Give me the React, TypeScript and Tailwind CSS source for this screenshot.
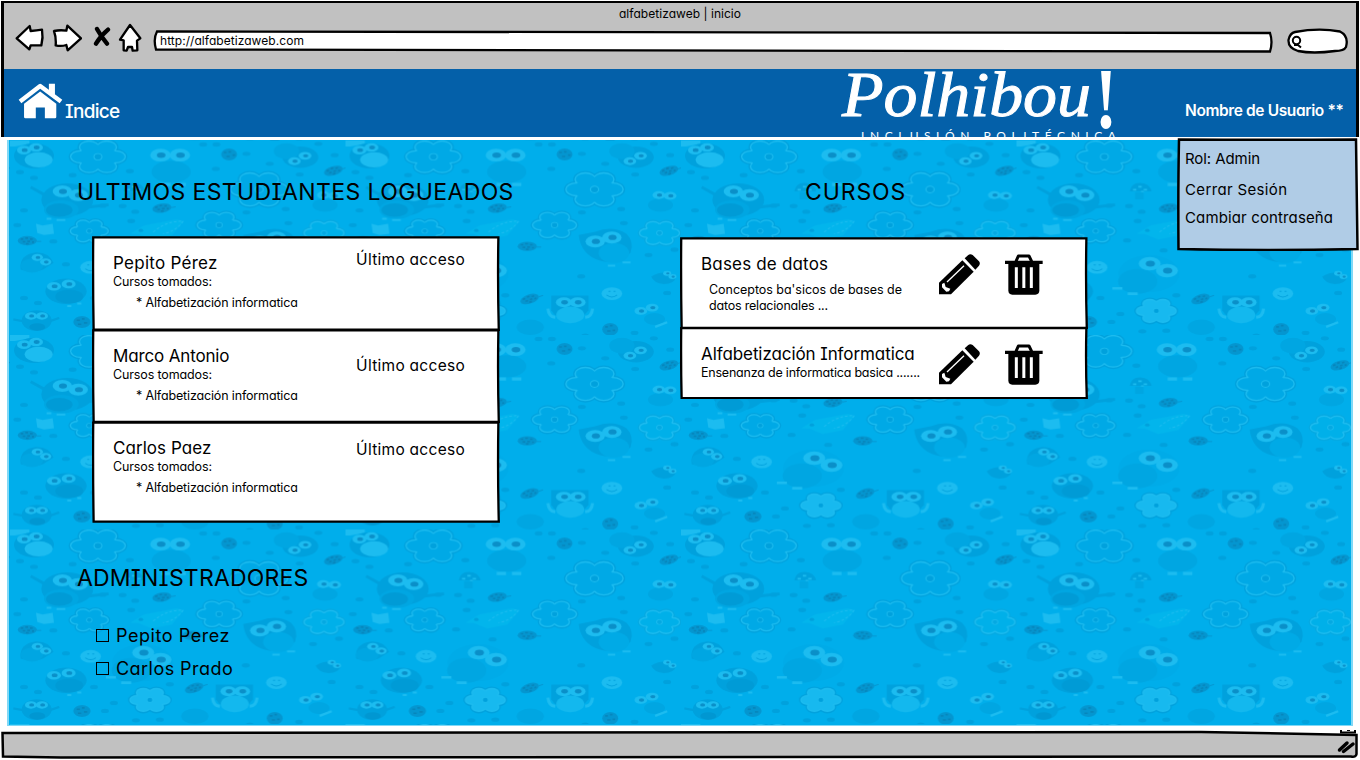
import React from "react";

type Pt = [number, number];

/* ---------- Owl pattern ---------- */

const DARK = "#00a1dd";
const MID = "#00a6e2";
const LIGHT = "#1cbcf0";
const EDGE = "#0a8fc8";

const Eyes = ({ a, b, r = 22 }: { a: Pt; b: Pt; r?: number }) => (
  <g>
    {[a, b].map(([x, y], i) => (
      <g key={i}>
        <ellipse cx={x} cy={y} rx={r} ry={r * 0.62} fill={LIGHT} />
        <ellipse cx={x + 2} cy={y} rx={r * 0.42} ry={r * 0.27} fill={EDGE} />
      </g>
    ))}
  </g>
);

const Blossom = ({ c, r, fill = "#00a9e6", line = LIGHT, rim = DARK }: { c: Pt; r: number; fill?: string; line?: string; rim?: string }) => {
  const petals = [0, 60, 120, 180, 240, 300].map((d) => {
    const t = (d * Math.PI) / 180;
    return [Math.cos(t) * r * 0.63, Math.sin(t) * r * 0.4] as Pt;
  });
  const layer = (grow: number, core: number, color: string) => (
    <g fill={color}>
      {petals.map(([x, y], i) => (
        <ellipse key={i} cx={x} cy={y} rx={r * 0.37 + grow} ry={r * 0.24 + grow} />
      ))}
      <ellipse rx={r * core} ry={r * core * 0.62} />
    </g>
  );
  return (
    <g transform={`translate(${c[0]} ${c[1]})`}>
      {layer(4, 0.6, rim)}
      {layer(0, 0.6, line)}
      {layer(-4, 0.68, fill)}
      <ellipse rx={r * 0.16} ry={r * 0.13} fill={line} />
      <ellipse rx={r * 0.12} ry={r * 0.1} fill={rim} />
    </g>
  );
};

const Bug = ({ c, tilt = 0 }: { c: Pt; tilt?: number }) => (
  <g transform={`translate(${c[0]} ${c[1]}) rotate(${tilt})`}>
    <ellipse rx="29" ry="14" fill="#0496d0" />
    <path d="M-20 -5h8M-6 -8h8M8 -5h8M-14 3h8M0 2h8M14 4h6M-4 9h8" stroke="#0686bc" strokeWidth="5" />
    <path d="M28 2h14" stroke="#0496d0" strokeWidth="3" />
  </g>
);

const Face = ({ c }: { c: Pt }) => (
  <g transform={`translate(${c[0]} ${c[1]})`}>
    <ellipse rx="31" ry="19" fill={LIGHT} />
    <path d="M-16 4Q0 16 16 4M-10 -7h6M5 -7h6" stroke={DARK} strokeWidth="3" fill="none" />
  </g>
);

const SPECKS: Pt[] = [
  [30, 95], [72, 112], [188, 104], [360, 92], [618, 85], [580, 12], [42, 210], [278, 196], [338, 197], [376, 214],
  [22, 254], [364, 242], [332, 300], [130, 303], [442, 330], [168, 372], [42, 473], [84, 488], [252, 473], [312, 521],
  [480, 465], [378, 573], [285, 545], [450, 571], [620, 12], [870, 102], [828, 206], [710, 216], [708, 408],
  [988, 328], [910, 344], [966, 458], [836, 248], [710, 40], [926, 10], [975, 44], [868, 578], [720, 586], [582, 597], [780, 70],
];

const OwlPattern = () => (
  <svg className="absolute inset-0 size-full" aria-hidden="true">
    <defs>
      <pattern id="owls" width="335.5" height="194.5" patternUnits="userSpaceOnUse" patternTransform="translate(1 0.5)">
        <g transform="scale(0.333)">
          {SPECKS.map(([x, y], i) => (
            <ellipse key={i} cx={x} cy={y} rx="12" ry="6.5" fill={DARK} />
          ))}
          <path d="M0 0H58V10L14 18H0Z" fill={LIGHT} />
          <ellipse cx="72" cy="46" rx="60" ry="38" fill={DARK} />
          <ellipse cx="86" cy="58" rx="42" ry="23" fill={LIGHT} />
          <Eyes a={[42, 29]} b={[78, 21]} r={21} />
          <Blossom c={[264, 49]} r={84} />
          <ellipse cx="484" cy="94" rx="59" ry="33" fill={MID} />
          <path d="M454 132h28M500 132h28" stroke={LIGHT} strokeWidth="10" />
          <Eyes a={[452, 44]} b={[510, 44]} r={31} />
          <path d="M62 140l40 22M236 200l60 -7" stroke={DARK} strokeWidth="9" />
          <ellipse cx="172" cy="178" rx="78" ry="49" fill={DARK} />
          <ellipse cx="154" cy="208" rx="52" ry="28" fill={MID} />
          <ellipse cx="148" cy="209" rx="40" ry="20" fill="#009bd6" />
          <Eyes a={[157, 153]} b={[205, 164]} r={29} />
          <path d="M110 235h14M140 239h26" stroke={LIGHT} strokeWidth="6" />
          <path d="M340 153q4-27 32-26q28 1 34 26z" fill={DARK} />
          <path d="M350 148h10M366 139h10M382 148h10M374 154h8" stroke={LIGHT} strokeWidth="5" />
          <path d="M356 155h26v22h-26z" fill={MID} />
          <path d="M362 280l40-25 100-18 18 6-34 42-60 12-40-16z" fill="#02b5ec" />
          <path d="M430 275q40-34 90-33q-20 30-60 38" stroke={LIGHT} strokeWidth="3" fill="none" strokeDasharray="8 6" />
          <ellipse cx="393" cy="270" rx="7" ry="5" fill={DARK} />
          <Blossom c={[238, 272]} r={59} />
          <path d="M78 250l20 5 30-5 4 30-30 4-20-6z" fill={LIGHT} />
          <Bug c={[52, 301]} />
          <Bug c={[546, 318]} />
          <Bug c={[456, 203]} tilt={-8} />
          <Bug c={[553, 476]} tilt={-18} />
          <ellipse cx="658" cy="42" rx="24" ry="18" fill="#0496d0" />
          <path d="M642 36h8M656 34h8M668 44h8M650 48h10" stroke="#0686bc" strokeWidth="5" />
          <Blossom c={[628, 254]} r={68} />
          <path d="M32 388q-6-46 46-52q40-1 53 32l-32 20q-30 12-67 0z" fill={DARK} />
          <ellipse cx="66" cy="376" rx="34" ry="21" fill={MID} />
          <Eyes a={[82, 351]} b={[107, 365]} r={17} />
          <Face c={[242, 381]} />
          <ellipse cx="398" cy="400" rx="92" ry="56" fill="#00abe8" />
          <ellipse cx="364" cy="423" rx="59" ry="37" fill={MID} />
          <path d="M288 444h30M334 460h30" stroke={LIGHT} strokeWidth="8" />
          <Eyes a={[400, 370]} b={[452, 391]} r={33} />
          <ellipse cx="168" cy="453" rx="62" ry="38" fill={DARK} />
          <ellipse cx="178" cy="469" rx="42" ry="21" fill="#009bd6" />
          <Eyes a={[132, 438]} b={[176, 431]} r={21} />
          <path d="M172 497h12M202 490h12" stroke={LIGHT} strokeWidth="6" />
          <Blossom c={[420, 512]} r={62} fill="#17b9ef" />
          <path d="M10 537l32 6M118 543l30 -10" stroke={DARK} strokeWidth="7" />
          <ellipse cx="80" cy="541" rx="45" ry="31" fill={DARK} />
          <ellipse cx="82" cy="560" rx="24" ry="11" fill="#0097d2" />
          <Eyes a={[63, 527]} b={[96, 527]} r={18} />
          <ellipse cx="216" cy="545" rx="26" ry="18" fill="#0496d0" />
          <path d="M200 540h10M216 536h8M204 552h10M222 548h10" stroke="#0686bc" strokeWidth="5" />
          <ellipse cx="555" cy="561" rx="41" ry="23" fill={MID} />
          <path d="M618 466h112v44q-20 28-54 30q-44-2-58-30z" fill={DARK} />
          <ellipse cx="675" cy="524" rx="42" ry="25" fill="#13b8ee" />
          <path d="M608 505q2 24 22 26M742 505q-2 24-22 26" stroke={LIGHT} strokeWidth="9" fill="none" />
          <Eyes a={[656, 486]} b={[697, 486]} r={24} />
          <path d="M700 284l50-10q52-20 94 6q24 24 12 58q-40 38-94 22q-54-16-62-76z" fill={DARK} />
          <ellipse cx="806" cy="338" rx="46" ry="30" fill="#00aae6" />
          <Eyes a={[750, 303]} b={[800, 291]} r={29} />
          <path d="M788 376h22M832 366h24" stroke={LIGHT} strokeWidth="6" />
          <Blossom c={[943, 278]} r={62} fill="#00b0e9" rim="#04a9e2" />
          <path d="M918 409q36-24 76 0q-6 22-38 22q-30-2-38-22z" fill={DARK} />
          <Eyes a={[966, 399]} b={[982, 409]} r={12} />
          <Face c={[800, 460]} />
          <ellipse cx="928" cy="536" rx="32" ry="18" fill={MID} />
          <Eyes a={[887, 512]} b={[921, 502]} r={19} />
          <path d="M930 560l36-14" stroke={LIGHT} strokeWidth="7" />
          <ellipse cx="795" cy="567" rx="24" ry="19" fill="#0496d0" />
          <path d="M780 560h8M794 556h8M786 572h10M802 570h8" stroke="#0686bc" strokeWidth="5" />
          <Blossom c={[748, 147]} r={88} />
          <Bug c={[971, 91]} tilt={-16} />
          <ellipse cx="872" cy="50" rx="54" ry="32" fill={DARK} />
          <ellipse cx="830" cy="32" rx="38" ry="24" fill={MID} />
          <Eyes a={[854, 62]} b={[886, 46]} r={19} />
          <ellipse cx="946" cy="194" rx="38" ry="20" fill={MID} />
          <Eyes a={[941, 164]} b={[975, 166]} r={19} />
        </g>
      </pattern>
    </defs>
    <rect width="100%" height="100%" fill="#00aeeb" />
    <rect width="100%" height="100%" fill="url(#owls)" />
  </svg>
);

/* ---------- Icons ---------- */

const outline = { fill: "#fff", stroke: "#000", strokeWidth: 7, strokeLinejoin: "round" as const };

const BackIcon = () => (
  <svg className="h-[30px] w-[30px]" viewBox="45 66 90 90">
    <path {...outline} d="M50 112 89 75 92 90Q110 88 126 86Q130 110 124 133L92 133 88 145Z" />
  </svg>
);
const ForwardIcon = () => (
  <svg className="h-[30px] w-[30px]" viewBox="155 66 90 90">
    <path {...outline} d="M161 90Q180 86 198 89L201 74 242 112 202 148 198 132Q182 137 166 133Q168 110 161 90Z" />
  </svg>
);
const StopIcon = () => (
  <svg className="h-[30px] w-[18px]" viewBox="279 66 54 90">
    <path d="M291 84Q304 108 321 128M324 86Q302 104 288 128" stroke="#000" strokeWidth="13" strokeLinecap="round" fill="none" />
  </svg>
);
const HomeIcon = () => (
  <svg className="h-[30px] w-6" viewBox="354 66 72 90">
    <path {...outline} d="M360 116 390 72 421 112 411 119 412 148 398 149 396 138 384 138 380 149 371 148 371 118Z" />
  </svg>
);
const HouseIcon = () => (
  <svg className="h-9 w-[45px]" viewBox="0 0 134 107" fill="#fff">
    <path d="M92 2h18v36l-18-14z" />
    <path d="M6 55 66 9l62 46" fill="none" stroke="#fff" strokeWidth="13" strokeLinejoin="round" />
    <path d="M18 62 66 25l48 37v39q0 4-4 4H80V73H53v32H22q-4 0-4-4z" />
  </svg>
);
const PencilIcon = () => (
  <svg className="h-[41px] w-[41px]" viewBox="0 0 123 123">
    <path d="M0 121V86L70 19l34 34L36 121Z" />
    <path d="M77 13 87 4q6-6 14-1l19 19q5 6 0 13L109 47Z" />
    <path d="M24 84 75 35" stroke="#fff" strokeWidth="4" />
    <path d="M9 90l7-4 4 13 14 5-4 8-8 1-13-13z" fill="#fff" />
  </svg>
);
const TrashIcon = () => (
  <svg className="h-[41px] w-[38px]" viewBox="0 0 114 123">
    <path d="M33 22 40 6h32l8 16" fill="none" stroke="#000" strokeWidth="9" strokeLinejoin="round" />
    <path d="M0 20h113v10H0z" />
    <path d="M10 30h93v79q0 13-12 13H22q-12 0-12-13z" />
    <path d="M34 40v62M56.500 40v62M79 40v62" stroke="#fff" strokeWidth="9" />
  </svg>
);

/* ---------- Browser chrome ---------- */

const Toolbar = () => (
  <div className="h-[69px] border-x-[3px] border-t-[2px] border-black bg-[#c1c1c1]">
    <div className="flex h-[21px] items-center justify-center text-[12px] tracking-[0.04px]">alfabetizaweb | inicio</div>
    <div className="flex h-[30px] pl-[11px]">
      <div className="-mt-px flex">
        <BackIcon />
        <div className="ml-[7px] flex"><ForwardIcon /></div>
        <div className="ml-[11px] flex"><StopIcon /></div>
        <div className="ml-[7px] flex"><HomeIcon /></div>
      </div>
      <div className="relative ml-[11px] mt-[5px] h-6 w-[1120px]">
        <svg className="absolute inset-0" width="1120" height="24">
          <path d="M4 2.500Q500 1.500 1117 4Q1120 13 1117 22.500Q700 21.500 3 20.500Q0 10 4 2.500Z" fill="#fff" stroke="#000" strokeWidth="2.300" />
        </svg>
        <span className="relative block pl-[7px] text-[12px] leading-[24px] tracking-[0.05px]">http://alfabetizaweb.com</span>
      </div>
      <svg className="ml-[14px] mt-1" width="61" height="26" viewBox="0 0 61 26">
        <path d="M8 4Q32-.5 53 3.500Q62 8 59 19Q57 23 48 23Q26 26 11 23Q1 20 1.500 12Q3 5 8 4Z" fill="#fff" stroke="#000" strokeWidth="2.300" />
        <circle cx="9.500" cy="12.500" r="3.700" fill="none" stroke="#000" strokeWidth="2" />
        <path d="M7 17h4l3 2.500" stroke="#000" strokeWidth="2" fill="none" />
      </svg>
    </div>
  </div>
);

const Logo = () => (
  <svg className="shrink-0" width="280" height="68" viewBox="0 0 280 68" fill="#fff" fontFamily="'Liberation Serif', serif">
    <text x="5" y="47" fontSize="64" fontStyle="italic" textLength="249" lengthAdjust="spacingAndGlyphs" stroke="#fff" strokeWidth="1">Polhibou</text>
    <text x="258" y="59" fontSize="87" fontWeight="bold" textLength="22" lengthAdjust="spacingAndGlyphs">!</text>
    <text x="24" y="71" fontSize="12" fontFamily="Lato, sans-serif" textLength="255">INCLUSIÓN POLITÉCNICA</text>
  </svg>
);

const Header = () => (
  <header className="flex h-[68px] border-r-[3px] border-l-[3px] border-black bg-[#0460a9] text-white">
    <div className="mt-[14px] shrink-0 pl-[14px]"><HouseIcon /></div>
    <span className="ml-[2px] mt-[31px] w-[772px] shrink-0 text-[19px] leading-6 font-medium tracking-[-0.7px]">Indice</span>
    <Logo />
    <span className="ml-[68px] mt-[30px] shrink-0 text-[15.5px] leading-6 font-semibold tracking-[-0.38px] whitespace-nowrap">Nombre de Usuario **</span>
  </header>
);

const UserMenu = () => (
  <div className="absolute top-[138px] left-[1177px] h-[113px] w-[182px] pl-[8px] text-[15px]">
    <svg className="absolute inset-0" width="182" height="113" fill="#b0cce6" stroke="#000" strokeWidth="2.500">
      <path d="M2 1.500Q90 2 179 1.500Q180 60 180.500 111Q90 113 1.500 111Q1 50 2 1.500Z" />
    </svg>
    <div className="relative pt-[9px] leading-[24px] tracking-[-0.08px]">Rol: Admin</div>
    <div className="relative mt-[7px] leading-[24px] tracking-[0.35px]">Cerrar Sesión</div>
    <div className="relative mt-[4px] leading-[24px] tracking-[0.13px]">Cambiar contraseña</div>
  </div>
);

/* ---------- Content ---------- */

const Frame = () => (
  <svg className="absolute inset-0 size-full" viewBox="0 0 100 100" preserveAspectRatio="none" fill="#fff" stroke="#000" strokeWidth="2.300">
    <path vectorEffect="non-scaling-stroke" d="M.3 1.500Q50 2.200 99.600 1.500Q99.400 50 99.700 98.700Q50 98.300 .4 98.700Q.2 50 .3 1.500Z" />
  </svg>
);

const Student = ({ name, box, access }: { name: React.ReactNode; box: string; access: string }) => (
  <article className={`relative flex justify-between pr-[35px] pl-[21px] ${box}`}>
    <Frame />
    <div className="relative pt-[16px]">
      <h3 className="text-[17px] leading-[22px]">{name}</h3>
      <p className="text-[12.5px] leading-4 tracking-[-0.13px]">Cursos tomados:</p>
      <p className="mt-[5px] pl-[23px] text-[12.5px] leading-4 tracking-[-0.15px]">* Alfabetización informatica</p>
    </div>
    <span className={`relative text-[15.5px] leading-5 tracking-[0.28px] ${access}`}>Último acceso</span>
  </article>
);

const Course = ({ box, children }: { box: string; children: React.ReactNode }) => (
  <article className={`relative flex pl-[21px] ${box}`}>
    <Frame />
    <div className="relative w-[238px] shrink-0 whitespace-nowrap">{children}</div>
    <div className="relative mt-[17px] flex gap-[25px]">
      <PencilIcon />
      <TrashIcon />
    </div>
  </article>
);

const Admin = ({ children }: { children: React.ReactNode }) => (
  <label className="flex h-[33px] items-center">
    <span className="mr-[7px] size-[13px] border border-black" />
    <span className="text-[18px]">{children}</span>
  </label>
);

const heading = "text-[23px] leading-8 whitespace-nowrap";

export default function App() {
  return (
    <div className="relative flex h-[760px] w-[1360px] flex-col overflow-hidden bg-white px-px pt-px font-['Inter',sans-serif] text-black [font-feature-settings:'cv08','cv11']">
      <Toolbar />
      <div className="-mt-px flex flex-col"><Header /></div>
      <main className="relative mt-[3px] ml-[6px] h-[586px] w-[1346px] shrink-0 border-x-2 border-b border-[#80d8f6]">
        <OwlPattern />
        <div className="relative flex">
          <div className="w-[588px] shrink-0 pt-[36px] pl-[68px]">
            <h2 className={`${heading} tracking-[0.38px]`}>ULTIMOS ESTUDIANTES LOGUEADOS</h2>
            <div className="mt-[28px] ml-[15px] w-[408px]">
              <Student name={<span className="tracking-[0.27px]">Pepito Pérez</span>} box="h-[95px]" access="mt-[14px]" />
              <Student name={<span className="tracking-[-0.15px]">Marco Antonio</span>} box="-mt-[2px] h-[94px]" access="mt-[27px]" />
              <Student name={<span className="tracking-[0.05px]">Carlos Paez</span>} box="-mt-[2px] h-[102px]" access="mt-[19px]" />
            </div>
            <h2 className={`${heading} mt-[39px] tracking-[0.18px]`}>ADMINISTRADORES</h2>
            <div className="mt-[25px] ml-[19px]">
              <Admin><span className="tracking-[0.55px]">Pepito Perez</span></Admin>
              <Admin><span className="tracking-[0.45px]">Carlos Prado</span></Admin>
            </div>
          </div>
          <div className="w-[500px] pt-[36px]">
            <h2 className={`${heading} pl-[208px] tracking-[0.9px]`}>CURSOS</h2>
            <div className="mt-[29px] ml-[83px] w-[408px]">
              <Course box="h-[92px]">
                <h3 className="mt-[16px] text-[17px] leading-[22px] tracking-[0.18px]">Bases de datos</h3>
                <p className="mt-[7px] pl-[8px] text-[12.5px] leading-4 tracking-[-0.03px]">Conceptos ba'sicos de bases de</p>
                <p className="pl-[8px] text-[12.5px] leading-4 tracking-[-0.2px]">datos relacionales ...</p>
              </Course>
              <Course box="-mt-[2px] h-[72px]">
                <h3 className="mt-[16px] text-[17px] leading-[22px] tracking-[-0.08px]">Alfabetización Informatica</h3>
                <p className="text-[12.5px] leading-4 tracking-[-0.21px]">Ensenanza de informatica basica .......</p>
              </Course>
            </div>
          </div>
        </div>
      </main>
      <footer className="relative mt-[4px] h-[29px] shrink-0">
        <svg width="1358" height="29">
          <path d="M1.500 3Q400 2 1200 2L1355.500 5V24Q1355 27.500 1350 26.500Q600 28 60 27.500L2 26.500Z" fill="#c1c1c1" stroke="#000" strokeWidth="2.500" />
          <path d="M1340 0v2.500h14V0M1346 0h3" stroke="#000" strokeWidth="2" fill="none" />
          <path d="M1338.500 20 1346 13M1342.500 21.500 1352 14" stroke="#000" strokeWidth="3.500" strokeLinecap="round" />
        </svg>
      </footer>
      <UserMenu />
    </div>
  );
}
